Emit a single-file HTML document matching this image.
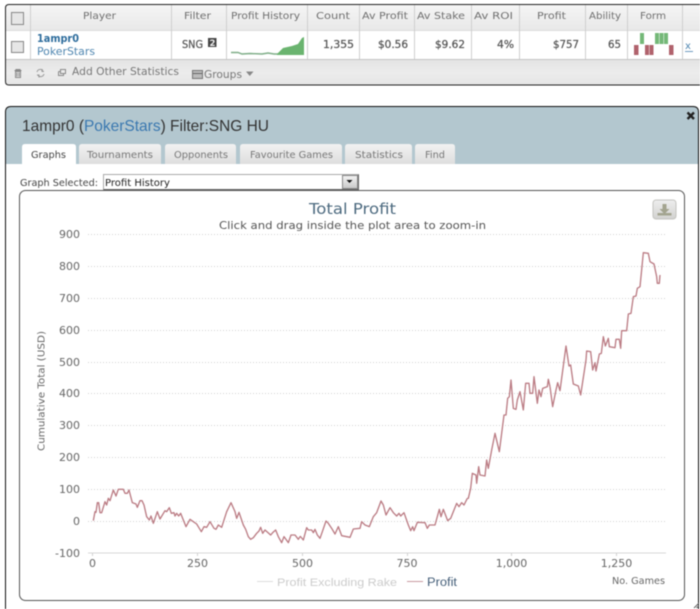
<!DOCTYPE html>
<html lang="en">
<head>
<meta charset="utf-8">
<title>Profit</title>
<style>
html,body{margin:0;padding:0;background:#fff;width:700px;height:609px;overflow:hidden}
svg{display:block;position:absolute;left:0;top:0;filter:blur(.4px)}
text{font-family:"DejaVu Sans","Liberation Sans",sans-serif;font-size:10px;fill:#666}
.h text{fill:#6f6f6f}
.d text{fill:#555;font-size:11px;stroke:#555;stroke-width:.25}
.tab{fill:#777;font-size:9.5px}
.y{font-size:11px;fill:#666;text-anchor:end}
.x{font-size:11px;fill:#666;text-anchor:middle}
</style>
</head>
<body>
<svg width="700" height="609" viewBox="0 0 700 609" xmlns="http://www.w3.org/2000/svg">
<defs>
<linearGradient id="hd" x1="0" y1="0" x2="0" y2="1"><stop offset="0" stop-color="#f5f5f5"/><stop offset="1" stop-color="#e8e8e8"/></linearGradient>
<linearGradient id="ft" x1="0" y1="0" x2="0" y2="1"><stop offset="0" stop-color="#e4e4e4"/><stop offset=".5" stop-color="#ececec"/><stop offset="1" stop-color="#e6e6e6"/></linearGradient>
<linearGradient id="tb" x1="0" y1="0" x2="0" y2="1"><stop offset="0" stop-color="#f2f2f2"/><stop offset="1" stop-color="#dedede"/></linearGradient>
<linearGradient id="dl" x1="0" y1="0" x2="0" y2="1"><stop offset="0" stop-color="#eeeeee"/><stop offset="1" stop-color="#d2d2d0"/></linearGradient>
<linearGradient id="sel" x1="0" y1="0" x2="0" y2="1"><stop offset="0" stop-color="#f4f4f4"/><stop offset="1" stop-color="#c8c8c8"/></linearGradient>
</defs>

<!-- top table -->
<path d="M5.5 8 Q5.500 4.500 9 4.500 H700 V85 H9 Q5.500 85 5.500 81.500 Z" fill="#fff"/>
<rect x="6" y="5" width="694" height="26" fill="url(#hd)"/>
<rect x="6" y="60" width="694" height="25" fill="url(#ft)"/>
<line x1="6" y1="59.500" x2="700" y2="59.500" stroke="#c4c4c4"/>
<line x1="6" y1="30.500" x2="700" y2="30.500" stroke="#dcdcdc"/>
<path d="M700 4.500 H9 Q5.500 4.500 5.500 8 V81.500 Q5.500 85 9 85 H700" fill="none" stroke="#222" stroke-width="1"/>
<g stroke="#cfcfcf">
<path d="M30.500 5V59M171.500 5V59M226.500 5V59M307.500 5V59M359.500 5V59M414.500 5V59M471.500 5V59M519.500 5V59M585.500 5V59M627.500 5V59M682.500 5V59"/>
</g>
<rect x="11.500" y="12.500" width="12" height="12" fill="#e6e6e6" stroke="#888"/>
<rect x="11.500" y="41.500" width="12" height="11" fill="#e6e6e6" stroke="#888"/>

<g class="h">
<text x="83" y="19" textLength="33" lengthAdjust="spacingAndGlyphs">Player</text>
<text x="184" y="19" textLength="27" lengthAdjust="spacingAndGlyphs">Filter</text>
<text x="231" y="19" textLength="69" lengthAdjust="spacingAndGlyphs">Profit History</text>
<text x="316" y="19" textLength="34" lengthAdjust="spacingAndGlyphs">Count</text>
<text x="362" y="19" textLength="46" lengthAdjust="spacingAndGlyphs">Av Profit</text>
<text x="417" y="19" textLength="48" lengthAdjust="spacingAndGlyphs">Av Stake</text>
<text x="474" y="19" textLength="39" lengthAdjust="spacingAndGlyphs">Av ROI</text>
<text x="537" y="19" textLength="29" lengthAdjust="spacingAndGlyphs">Profit</text>
<text x="589" y="19" textLength="32" lengthAdjust="spacingAndGlyphs">Ability</text>
<text x="640" y="19" textLength="26" lengthAdjust="spacingAndGlyphs">Form</text>
</g>

<text x="37" y="42" textLength="42" lengthAdjust="spacingAndGlyphs" style="fill:#2d6c9c;font-weight:bold;font-size:11px">1ampr0</text>
<text x="37" y="55" textLength="58" lengthAdjust="spacingAndGlyphs" style="fill:#4f86b0;font-size:11px">PokerStars</text>
<g class="d">
<text x="182" y="48" textLength="21" lengthAdjust="spacingAndGlyphs">SNG</text>
<text x="323" y="48" textLength="31" lengthAdjust="spacingAndGlyphs">1,355</text>
<text x="378" y="48" textLength="30" lengthAdjust="spacingAndGlyphs">$0.56</text>
<text x="435" y="48" textLength="30" lengthAdjust="spacingAndGlyphs">$9.62</text>
<text x="497" y="48" textLength="17" lengthAdjust="spacingAndGlyphs">4%</text>
<text x="553" y="48" textLength="26" lengthAdjust="spacingAndGlyphs">$757</text>
<text x="608" y="48" textLength="13" lengthAdjust="spacingAndGlyphs">65</text>
</g>
<rect x="208" y="38" width="8.500" height="9" fill="#444"/>
<text x="209.500" y="46" style="fill:#eee;font-size:8.500px;font-weight:bold">2</text>

<!-- sparkline -->
<path d="M231 52.500L238 52.500 242 54 250 53.500 262 54 268 53 274 54 278 54" fill="none" stroke="#7fae88" stroke-width="1.400"/>
<path d="M277 54 283 48 292 46 298 44 302 38 304 37 304 55 277 55Z" fill="#6ab46f"/>

<!-- form -->
<g fill="#74b878">
<rect x="640" y="33" width="4" height="11"/><rect x="655" y="33" width="4" height="11"/><rect x="659.500" y="33" width="4" height="11"/><rect x="664" y="33" width="4" height="11"/>
</g>
<g fill="#b0626c">
<rect x="634" y="45" width="4.500" height="10"/><rect x="645" y="45" width="4" height="10"/><rect x="649.500" y="45" width="4" height="10"/><rect x="669" y="45" width="4.500" height="10"/>
</g>
<text x="685" y="49" style="fill:#4f86b0;font-size:10px">x</text>
<line x1="685" y1="51.500" x2="693" y2="51.500" stroke="#6f9cc0"/>

<!-- footer -->
<path d="M14.500 70.500h7M16 70.500v-1h4v1M15.500 71.500h5v6h-5zM17 72.500v4M19 72.500v4" fill="none" stroke="#8a8a8a"/>
<path d="M37 72a3.500 3.500 0 0 1 6-1.500M44 74a3.500 3.500 0 0 1-6 1.500M42 69v2.500h2M39 77.500v-2.500h-2" fill="none" stroke="#999"/>
<path d="M60.500 69.500h5v4h-5zM58.500 71.500h2M58.500 71.500v4h5v-2" fill="none" stroke="#8a8a8a"/>
<text x="72" y="75" textLength="107" lengthAdjust="spacingAndGlyphs" style="fill:#777;font-size:10.500px">Add Other Statistics</text>
<rect x="192.500" y="70.500" width="10" height="8" fill="#bbb" stroke="#777"/>
<line x1="193" y1="73.500" x2="202" y2="73.500" stroke="#666"/>
<text x="204" y="78" textLength="38" lengthAdjust="spacingAndGlyphs" style="fill:#777;font-size:10.500px">Groups</text>
<path d="M246 71.500h7.500l-3.750 4.500z" fill="#888"/>

<!-- panel -->
<path d="M5.500 612V112 Q5.500 106.500 11 106.500H693 Q698.500 106.500 698.500 112V612" fill="#fff"/>
<path d="M6 164V112 Q6 107 11 107H693 Q698 107 698 112V164Z" fill="#b3c7cf"/>
<path d="M5.500 612V112 Q5.500 106.500 11 106.500H693 Q698.500 106.500 698.500 112V612" fill="none" stroke="#111" stroke-width="1"/>
<text x="22" y="131" textLength="247" lengthAdjust="spacingAndGlyphs" style="font-family:'Liberation Sans',sans-serif;font-size:16px;fill:#333">1ampr0 (<tspan fill="#3a78b0">PokerStars</tspan>) Filter:SNG HU</text>
<path d="M687.500 112.500l6.500 6.500M694 112.500l-6.500 6.500" fill="none" stroke="#222" stroke-width="2.400"/>

<!-- tabs -->
<path d="M22 164V147 Q22 144 25 144H73 Q76 144 76 147V164Z" fill="#fff"/>
<text x="31" y="158" textLength="35" lengthAdjust="spacingAndGlyphs" style="fill:#444;font-size:9.500px">Graphs</text>
<g fill="url(#tb)">
<path d="M79 164V147 Q79 144 82 144H158 Q161 144 161 147V164Z"/>
<path d="M165 164V147 Q165 144 168 144H233 Q236 144 236 147V164Z"/>
<path d="M240 164V147 Q240 144 243 144H339 Q342 144 342 147V164Z"/>
<path d="M345 164V147 Q345 144 348 144H409 Q412 144 412 147V164Z"/>
<path d="M415 164V147 Q415 144 418 144H452 Q455 144 455 147V164Z"/>
</g>
<text class="tab" x="87" y="158" textLength="66" lengthAdjust="spacingAndGlyphs">Tournaments</text>
<text class="tab" x="174" y="158" textLength="54" lengthAdjust="spacingAndGlyphs">Opponents</text>
<text class="tab" x="250" y="158" textLength="83" lengthAdjust="spacingAndGlyphs">Favourite Games</text>
<text class="tab" x="355" y="158" textLength="48" lengthAdjust="spacingAndGlyphs">Statistics</text>
<text class="tab" x="425" y="158" textLength="20" lengthAdjust="spacingAndGlyphs">Find</text>

<!-- select -->
<text x="20" y="186" textLength="78" lengthAdjust="spacingAndGlyphs" style="fill:#444;font-size:9.500px">Graph Selected:</text>
<rect x="103.500" y="174.500" width="255" height="15" fill="#fff" stroke="#aaa"/>
<path d="M103.500 189.500H358.500V174.500" fill="none" stroke="#666"/>
<text x="105" y="186" textLength="65" lengthAdjust="spacingAndGlyphs" style="fill:#222;font-size:9.500px">Profit History</text>
<rect x="342.500" y="175.500" width="15" height="13" fill="url(#sel)" stroke="#888"/>
<path d="M346.500 180h6l-3 3z" fill="#111"/>

<!-- chart box -->
<rect x="19.500" y="190.500" width="665" height="410" rx="6" ry="6" fill="#fff" stroke="#555"/>
<text x="309" y="214" textLength="87" lengthAdjust="spacingAndGlyphs" style="font-size:15px;fill:#4e6b80">Total Profit</text>
<text x="219" y="229" textLength="267" lengthAdjust="spacingAndGlyphs" style="font-size:11px;fill:#555">Click and drag inside the plot area to zoom-in</text>
<rect x="653" y="200" width="23" height="19" rx="3" fill="url(#dl)" stroke="#c4c4c0"/>
<path d="M662.500 204h4v5h3l-5 5-5-5h3z" fill="#a3a48f"/>
<rect x="657.500" y="213" width="14" height="2.500" fill="#a3a48f"/>

<!-- grid -->
<g stroke="#cfcfcf" stroke-width="1" stroke-dasharray="1 2" fill="none">
<path d="M88 234.500H665M88 266.500H665M88 298.500H665M88 330.500H665M88 362.500H665M88 393.500H665M88 425.500H665M88 457.500H665M88 489.500H665M88 521.500H665"/>
</g>
<line x1="88" y1="553" x2="666" y2="553" stroke="#d8d8d8"/>
<path d="M92.500 553v3M197.500 553v3M302.500 553v3M407.500 553v3M511.500 553v3M616.500 553v3" stroke="#d0d0d0"/>

<g>
<text class="y" x="80" y="238">900</text>
<text class="y" x="80" y="270">800</text>
<text class="y" x="80" y="302">700</text>
<text class="y" x="80" y="334">600</text>
<text class="y" x="80" y="366">500</text>
<text class="y" x="80" y="397">400</text>
<text class="y" x="80" y="429">300</text>
<text class="y" x="80" y="461">200</text>
<text class="y" x="80" y="493">100</text>
<text class="y" x="80" y="525">0</text>
<text class="y" x="80" y="557">-100</text>
<text class="x" x="92.500" y="567">0</text>
<text class="x" x="197.500" y="567">250</text>
<text class="x" x="302.500" y="567">500</text>
<text class="x" x="407" y="567">750</text>
<text class="x" x="511.500" y="567">1,000</text>
<text class="x" x="616.500" y="567">1,250</text>
</g>
<text transform="translate(44.500,451) rotate(-90)" x="0" y="0" textLength="120" lengthAdjust="spacingAndGlyphs" style="font-size:9.500px;fill:#666">Cumulative Total (USD)</text>

<!-- legend -->
<line x1="257" y1="581.500" x2="273" y2="581.500" stroke="#dddddd"/>
<text x="277" y="586" textLength="120" lengthAdjust="spacingAndGlyphs" style="font-size:11px;fill:#cccccc;font-family:'Liberation Sans',sans-serif">Profit Excluding Rake</text>
<line x1="407" y1="581.500" x2="423" y2="581.500" stroke="#c99aa0"/>
<text x="427" y="586" textLength="30" lengthAdjust="spacingAndGlyphs" style="font-size:11.500px;fill:#46607a;font-family:'Liberation Sans',sans-serif">Profit</text>
<text x="612" y="584" textLength="53" lengthAdjust="spacingAndGlyphs" style="font-size:9.500px;fill:#666">No. Games</text>

<!-- series -->
<g fill="none" stroke="#bb7c84" stroke-width="4" stroke-linejoin="round">
<polyline transform="translate(80,470) scale(.33333)" points="40,152 45,125 48,127 52,98 56,98 60,128 65,128 75,95 80,105 85,85 90,92 100,60 108,78 115,58 130,58 135,70 142,70 147,60 157,98 168,102 172,112 180,92 186,92 192,105 200,140 208,150 213,138 220,160 232,125 240,147 255,122 260,125 268,113 274,130 282,128 285,138 290,130 296,138 302,130 318,170 330,148 340,155 350,162 356,172 364,185 372,170 380,172 390,155 402,175 408,178 415,165 425,172 440,125 453,98 465,125 470,145 477,127 490,165 497,178 505,200 512,208 520,203 530,190 537,183 542,172 548,190 555,180 572,195 578,188 587,180 595,200 605,218 612,200 625,218 633,195 645,195 655,208 660,200"/>
<polyline transform="translate(280,470) scale(.33333)" points="60,198 70,210 80,173 85,180 95,180 100,188 105,178 112,195 120,205 127,185 138,153 145,160 155,175 165,192 175,170 185,197 210,202 220,177 240,175 245,155 255,165 268,170 280,140 290,128 303,93 310,105 318,135 330,113 340,128 350,138 357,130 362,138 372,128 385,165 392,182 398,170 402,182 412,157 435,158 442,175 448,165 465,165 478,118 483,140 490,118 503,152 512,145 530,100 537,110 545,98 552,105 562,85"/>
<polyline transform="translate(440,370) scale(.33333)" points="82,385 85,385 92,355 97,310 108,315 110,340 116,290 120,315 135,318 140,270 145,295 155,240 165,190 178,245 185,190 192,135 198,135 203,85 208,80 213,30 220,115 228,118 232,90 240,65 250,120 257,40 267,40 270,70 278,70 282,20 292,100 297,60 303,80 308,55 322,50 325,28 330,50"/>
<polyline transform="translate(460,240) scale(.33333)" points="270,440 278,500 288,450 293,428 300,452 318,318 327,378 332,375 340,432 355,438 362,465 378,360 380,333 392,335 398,390 405,368 408,393 418,342 424,340 430,290 436,318 445,295 448,320 465,323 468,298 478,298 482,325 485,272 500,272 505,222 513,220 520,170 528,168 532,145 540,140 550,38 565,40 570,65 582,72 590,110 592,130 598,130 600,105"/>
</g>

<!-- resize handle -->
<path d="M694 608l5-5M696.500 608l2.500-2.500" stroke="#666" fill="none"/>
</svg>
</body>
</html>
